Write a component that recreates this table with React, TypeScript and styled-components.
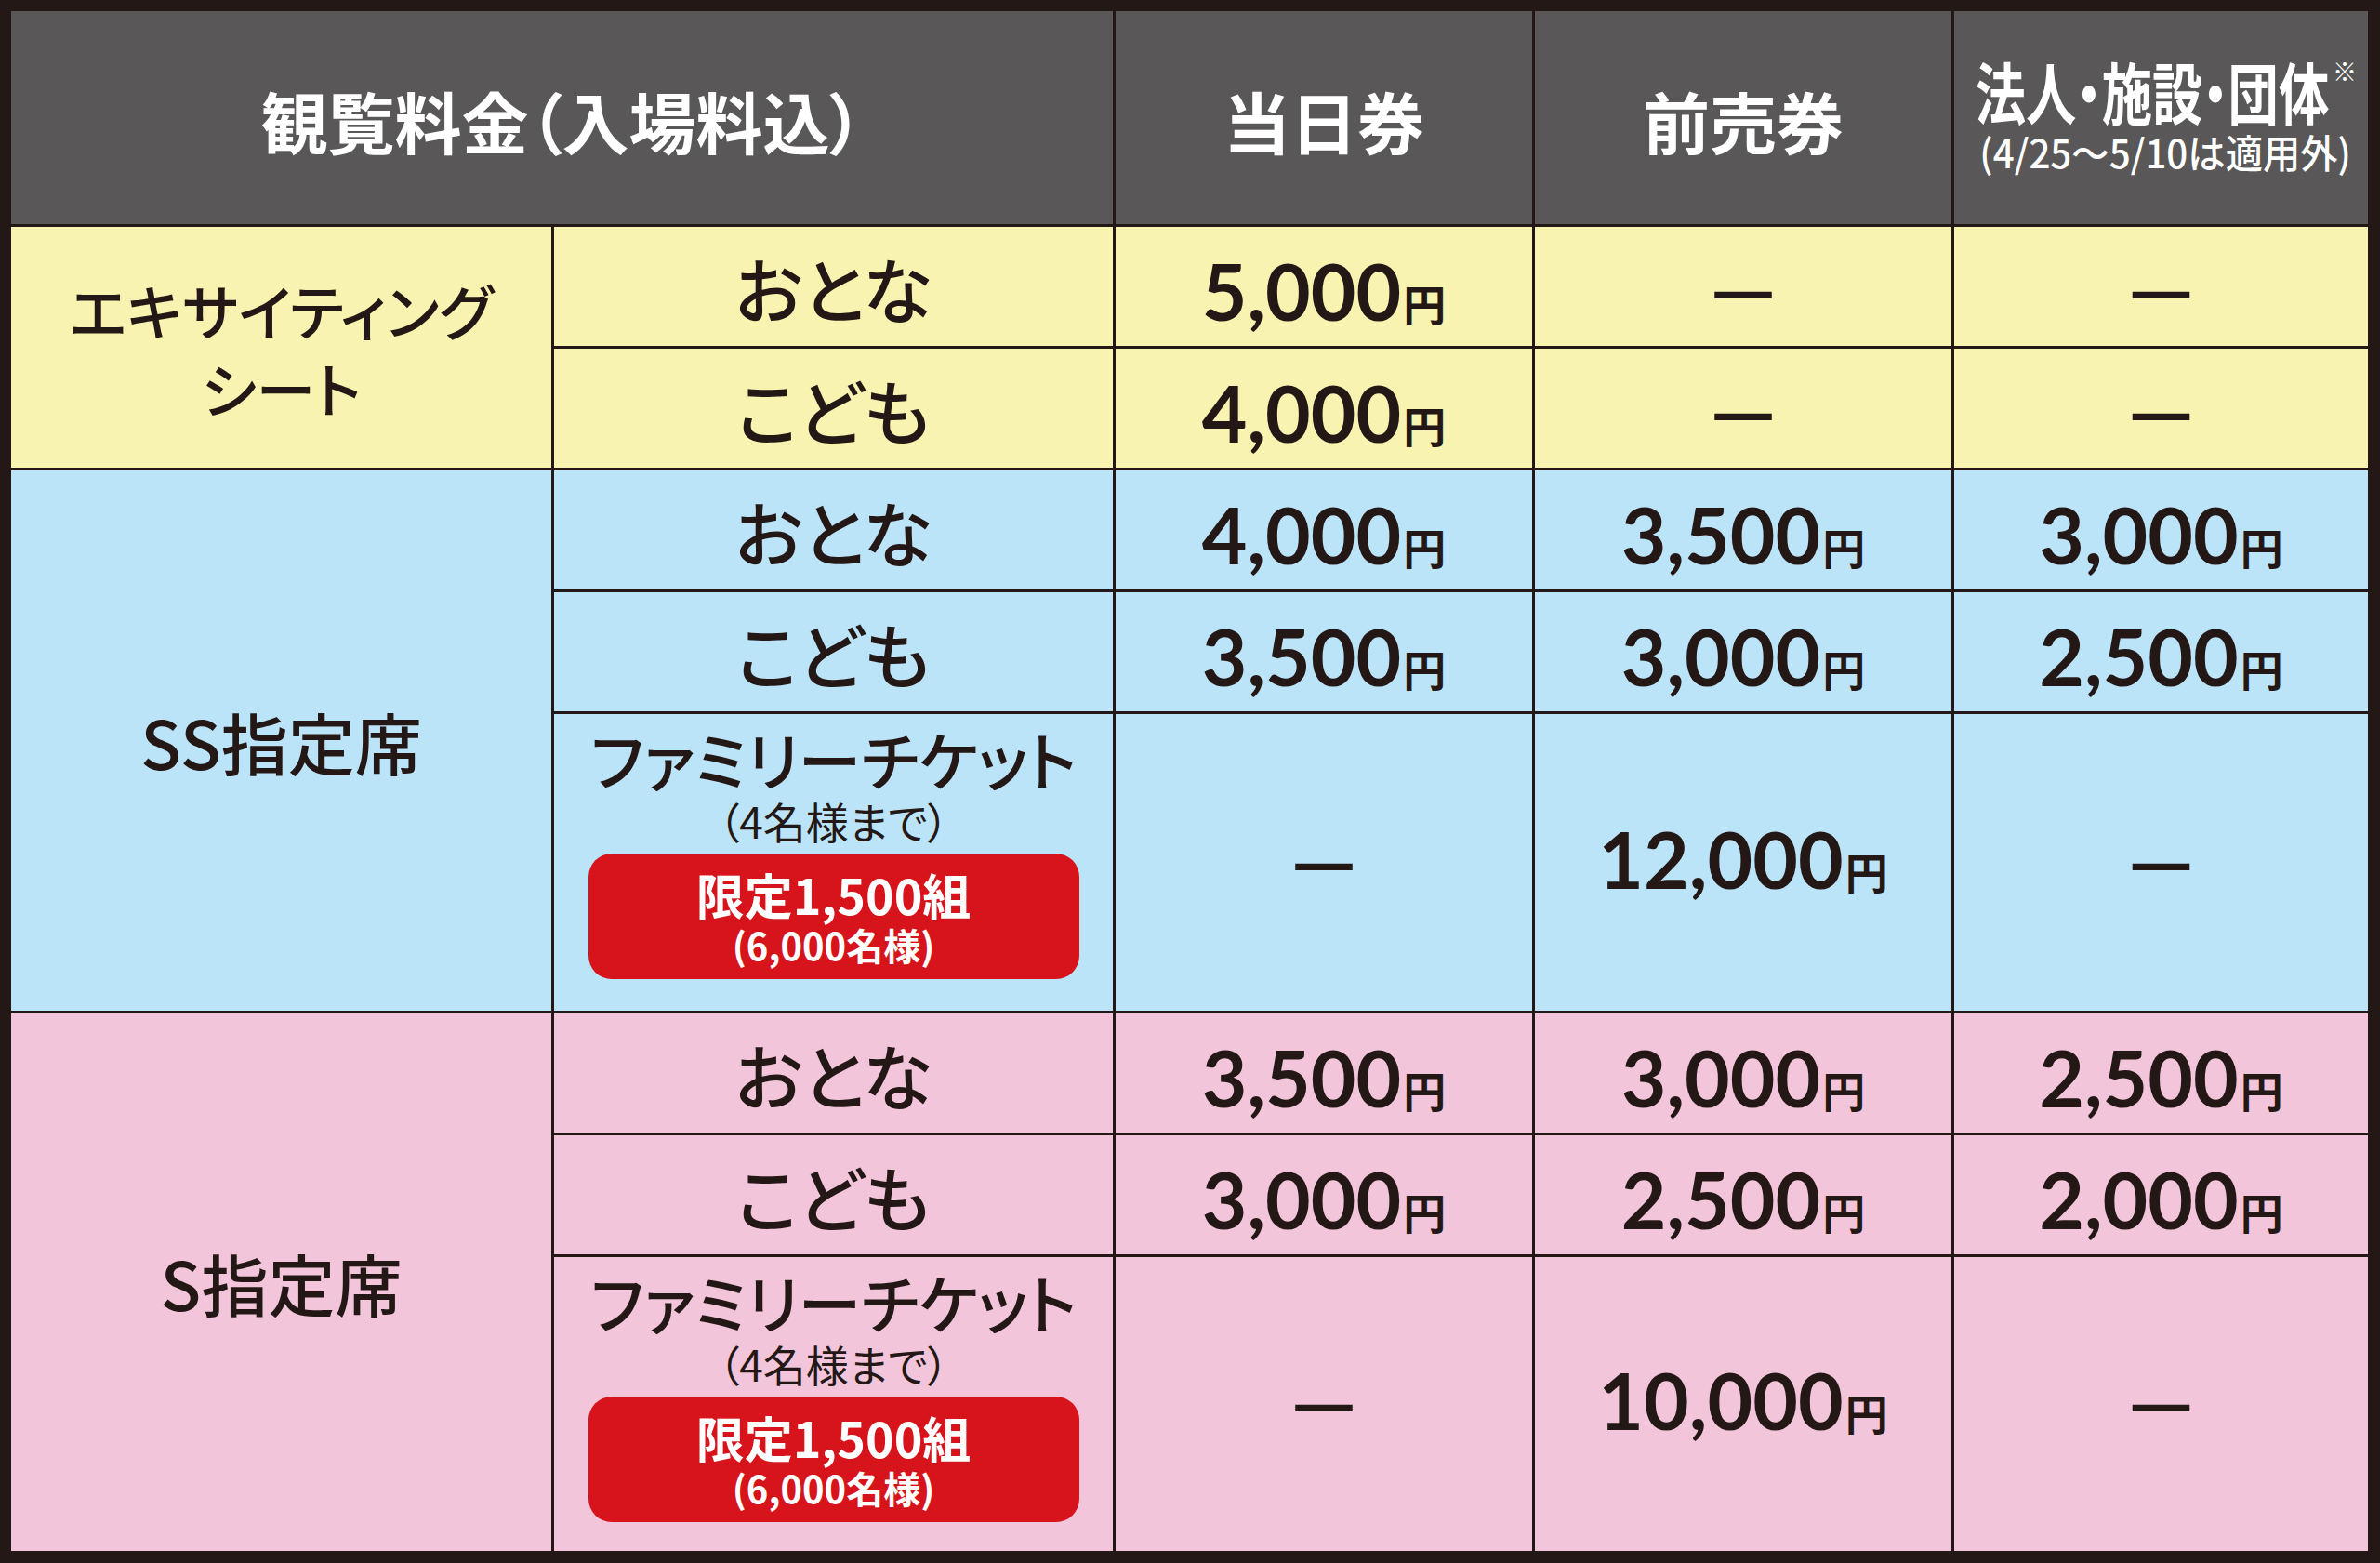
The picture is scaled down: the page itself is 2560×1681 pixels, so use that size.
import React from "react";
import styled, { createGlobalStyle } from "styled-components";

const GlobalStyle = createGlobalStyle`
  html, body {
    margin: 0;
    padding: 0;
    background: #231815;
  }
  body {
    font-family: "Noto Sans CJK JP", "Noto Sans", sans-serif;
    font-feature-settings: "palt";
  }
`;

type Tone = "head" | "yellow" | "blue" | "pink";

const toneBg: Record<Tone, string> = {
  head: "#595757",
  yellow: "#f8f3b0",
  blue: "#bce4f8",
  pink: "#f3c5da",
};

const Table = styled.div`
  display: grid;
  grid-template-columns: 581px 601px 448px 448px 445px;
  grid-template-rows: 229px repeat(4, 128px) 319px 128px 128px 316px;
  gap: 3px;
  padding: 12px 13px 13px 12px;
  width: 2560px;
  height: 1681px;
  box-sizing: border-box;
  background: #231815;
`;

const Cell = styled.div<{ $tone: Tone; $rows?: number; $cols?: number }>`
  display: flex;
  flex-direction: column;
  align-items: center;
  justify-content: center;
  background: ${(p) => toneBg[p.$tone]};
  color: ${(p) => (p.$tone === "head" ? "#ffffff" : "#231815")};
  grid-row: span ${(p) => p.$rows ?? 1};
  grid-column: span ${(p) => p.$cols ?? 1};
  text-align: center;
  min-width: 0;
  white-space: nowrap;
`;

const FamilyCell = styled(Cell)`
  justify-content: flex-start;
  padding-top: 14px;
  box-sizing: border-box;
`;

const HeadTitle = styled.span`
  font-size: 72px;
  font-weight: 700;
  line-height: 1;
  padding-top: 4px;
`;

const HeadGroup = styled.div`
  display: flex;
  flex-direction: column;
  align-items: center;
  gap: 9px;
  margin-bottom: 8px;
  padding-left: 10px;
`;

const HeadCondensedRow = styled.div`
  display: flex;
  align-items: flex-start;
`;

const Condensed = styled.span<{ $scale: number }>`
  display: inline-block;
  transform: scaleX(${(p) => p.$scale});
  transform-origin: center;
  flex-shrink: 0;
`;

const HeadStrong = styled(Condensed)`
  font-size: 72px;
  font-weight: 700;
  line-height: 1;
  margin: 0 -61px;
`;

const NoteMark = styled.span`
  font-size: 26px;
  font-weight: 500;
  line-height: 1;
  margin-top: 2px;
  margin-left: 3px;
`;

const HeadNote = styled(Condensed)`
  font-size: 42px;
  font-weight: 500;
  line-height: 1;
`;

const GroupLabel = styled.span`
  font-size: 64px;
  font-weight: 500;
  line-height: 84px;
`;

const SeatLabel = styled.span`
  font-size: 72px;
  font-weight: 500;
  line-height: 1;
`;

const TypeLabel = styled.span`
  font-size: 76px;
  font-weight: 500;
  line-height: 1;
  padding-top: 2px;
`;

const FamilyTitle = styled.span`
  font-size: 68px;
  font-weight: 500;
  line-height: 1;
`;

const FamilyNote = styled.span`
  font-size: 46px;
  font-weight: 400;
  line-height: 1;
  margin-top: 9px;
`;

const Badge = styled.div`
  display: flex;
  flex-direction: column;
  align-items: center;
  justify-content: center;
  gap: 8px;
  width: 528px;
  height: 135px;
  margin-top: 13px;
  border-radius: 25px;
  background: #d7141b;
  color: #ffffff;
`;

const BadgeMain = styled.span`
  font-size: 52px;
  font-weight: 700;
  line-height: 1;
`;

const BadgeSub = styled.span`
  font-size: 40px;
  font-weight: 700;
  line-height: 1;
`;

const Amount = styled.div<{ $drop: number }>`
  display: flex;
  align-items: baseline;
  padding-top: ${(p) => Math.max(p.$drop, 0)}px;
  padding-bottom: ${(p) => Math.max(-p.$drop, 0)}px;
`;

const Num = styled.span`
  font-family: "Lato", "Liberation Sans", sans-serif;
  font-size: 84px;
  font-weight: 700;
  line-height: 1;
`;

const Yen = styled.span`
  font-size: 46px;
  font-weight: 700;
  line-height: 1;
  margin-left: 2px;
`;

const Dash = styled.span<{ $drop: number }>`
  font-size: 76px;
  font-weight: 700;
  line-height: 1;
  padding-top: ${(p) => Math.max(p.$drop, 0)}px;
  padding-bottom: ${(p) => Math.max(-p.$drop, 0)}px;
`;

type PriceValue = string | null;

const Price: React.FC<{ value: PriceValue; tall: boolean }> = ({ value, tall }) =>
  value ? (
    <Amount $drop={tall ? -8 : 10}>
      <Num>{value}</Num>
      <Yen>円</Yen>
    </Amount>
  ) : (
    <Dash $drop={tall ? -14 : -4}>—</Dash>
  );

type Row = { kind: "plain" | "family"; label: string; prices: PriceValue[] };
type Group = { tone: Tone; label: React.ReactNode; rows: Row[] };

const groups: Group[] = [
  {
    tone: "yellow",
    label: (
      <GroupLabel>
        エキサイティング
        <br />
        シート
      </GroupLabel>
    ),
    rows: [
      { kind: "plain", label: "おとな", prices: ["5,000", null, null] },
      { kind: "plain", label: "こども", prices: ["4,000", null, null] },
    ],
  },
  {
    tone: "blue",
    label: <SeatLabel>SS指定席</SeatLabel>,
    rows: [
      { kind: "plain", label: "おとな", prices: ["4,000", "3,500", "3,000"] },
      { kind: "plain", label: "こども", prices: ["3,500", "3,000", "2,500"] },
      { kind: "family", label: "ファミリーチケット", prices: [null, "12,000", null] },
    ],
  },
  {
    tone: "pink",
    label: <SeatLabel>S指定席</SeatLabel>,
    rows: [
      { kind: "plain", label: "おとな", prices: ["3,500", "3,000", "2,500"] },
      { kind: "plain", label: "こども", prices: ["3,000", "2,500", "2,000"] },
      { kind: "family", label: "ファミリーチケット", prices: [null, "10,000", null] },
    ],
  },
];

export default function App() {
  return (
    <>
      <GlobalStyle />
      <Table>
        <Cell $tone="head" $cols={2}>
          <HeadTitle>観覧料金（入場料込）</HeadTitle>
        </Cell>
        <Cell $tone="head">
          <HeadTitle>当日券</HeadTitle>
        </Cell>
        <Cell $tone="head">
          <HeadTitle>前売券</HeadTitle>
        </Cell>
        <Cell $tone="head">
          <HeadGroup>
            <HeadCondensedRow>
              <HeadStrong $scale={0.755}>法人・施設・団体</HeadStrong>
              <NoteMark>※</NoteMark>
            </HeadCondensedRow>
            <HeadNote $scale={0.96}>(4/25〜5/10は適用外)</HeadNote>
          </HeadGroup>
        </Cell>

        {groups.map((g, gi) => (
          <React.Fragment key={gi}>
            <Cell $tone={g.tone} $rows={g.rows.length}>
              {g.label}
            </Cell>
            {g.rows.map((r, ri) => (
              <React.Fragment key={ri}>
                {r.kind === "plain" ? (
                  <Cell $tone={g.tone}>
                    <TypeLabel>{r.label}</TypeLabel>
                  </Cell>
                ) : (
                  <FamilyCell $tone={g.tone}>
                    <FamilyTitle>{r.label}</FamilyTitle>
                    <FamilyNote>（4名様まで）</FamilyNote>
                    <Badge>
                      <BadgeMain>限定1,500組</BadgeMain>
                      <BadgeSub>(6,000名様)</BadgeSub>
                    </Badge>
                  </FamilyCell>
                )}
                {r.prices.map((p, pi) => (
                  <Cell $tone={g.tone} key={pi}>
                    <Price value={p} tall={r.kind === "family"} />
                  </Cell>
                ))}
              </React.Fragment>
            ))}
          </React.Fragment>
        ))}
      </Table>
    </>
  );
}
